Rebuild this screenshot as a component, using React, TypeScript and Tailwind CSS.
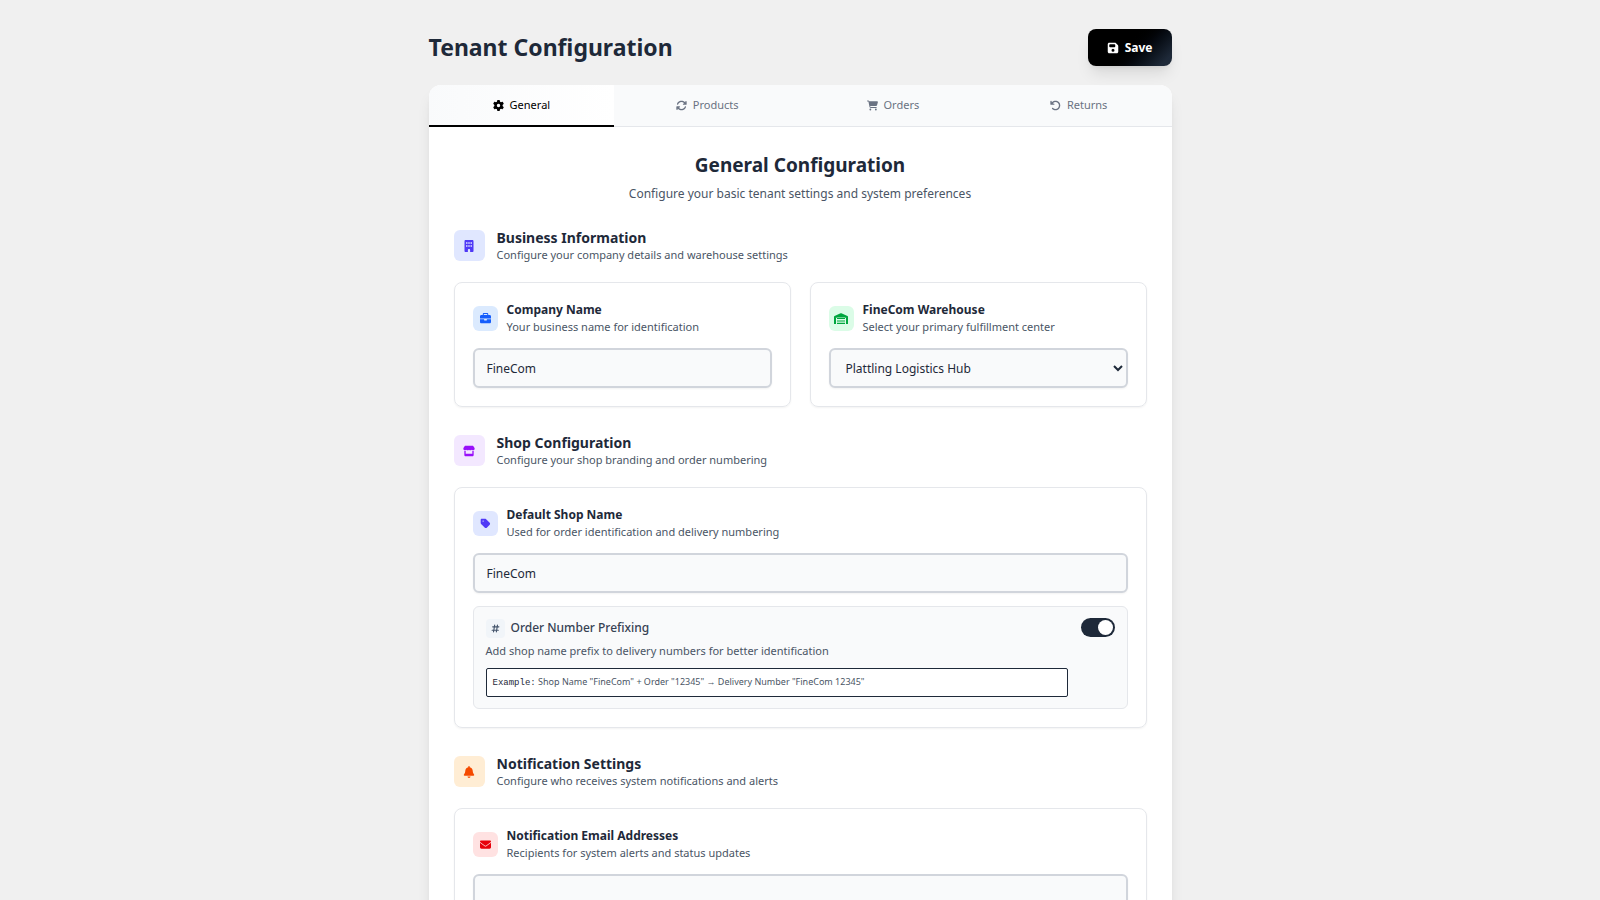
import { useId, type ReactNode } from "react";
import {
  FaArrowRotateLeft,
  FaArrowsRotate,
  FaBell,
  FaBriefcase,
  FaBuilding,
  FaCartShopping,
  FaEnvelope,
  FaFloppyDisk,
  FaGear,
  FaHashtag,
  FaStore,
  FaTag,
} from "react-icons/fa6";

const tabs = [
  { label: "General", icon: FaGear, active: true },
  { label: "Products", icon: FaArrowsRotate, active: false },
  { label: "Orders", icon: FaCartShopping, active: false },
  { label: "Returns", icon: FaArrowRotateLeft, active: false },
];

const fieldClass =
  "h-10 w-full rounded-md border-2 border-gray-300 bg-gray-50 text-xs text-gray-800 shadow-xs outline-none";

function WarehouseIcon() {
  return (
    <svg viewBox="0 0 14 11" className="h-[11px]" fill="none" stroke="currentColor" aria-hidden="true">
      <path d="M1 11V4L7 1.2 13 4v7" strokeWidth="2" strokeLinejoin="round" />
      <path d="M2 3.6 7 1.4l5 2.2v.9H2z" fill="currentColor" stroke="none" />
      <path d="M3 5.5h8M3 8h8M3 10.3h8" strokeWidth="1.2" />
    </svg>
  );
}

function Section({ icon, tone, title, text, children }: {
  icon: ReactNode; tone: string; title: string; text: string; children: ReactNode;
}) {
  return (
    <section className="flex flex-col gap-[19px]">
      <div className="flex items-center gap-3">
        <span className={`flex size-[31px] shrink-0 items-center justify-center rounded-md text-xs [&>svg]:w-auto ${tone}`}>{icon}</span>
        <div>
          <h3 className="text-sm leading-[19px] font-bold text-gray-800">{title}</h3>
          <p className="text-[11px] leading-4 text-gray-600">{text}</p>
        </div>
      </div>
      {children}
    </section>
  );
}

function Card({ icon, tone, title, text, htmlFor, children }: {
  icon: ReactNode; tone: string; title: string; text: string; htmlFor: string; children: ReactNode;
}) {
  return (
    <div className="rounded-lg border border-gray-200 p-[18px] shadow-xs">
      <div className="mb-[13px] flex items-center gap-[9px]">
        <span className={`flex size-[25px] shrink-0 items-center justify-center rounded-md text-[11px] [&>svg]:w-auto ${tone}`}>{icon}</span>
        <div>
          <label htmlFor={htmlFor} className="block text-xs leading-[18px] font-bold text-gray-800">{title}</label>
          <p className="text-[11px] leading-4 text-gray-600">{text}</p>
        </div>
      </div>
      {children}
    </div>
  );
}

export default function App() {
  const id = useId();
  return (
    <div className="h-screen overflow-hidden bg-[#f0f0f0] font-['Noto_Sans',sans-serif]">
      <main className="mx-auto max-w-[743px] pt-[29px]">
        <header className="mb-[19px] flex items-start justify-between">
          <h1 className="text-[23px] leading-9 font-bold text-gray-800">Tenant Configuration</h1>
          <button type="button" className="flex h-[37px] items-center gap-[6px] rounded-lg bg-linear-135 from-black from-40% to-gray-800 to-90% px-[19px] text-xs font-bold text-white shadow-lg">
            <FaFloppyDisk className="size-3" />
            Save
          </button>
        </header>
        <div className="rounded-t-xl bg-white shadow-lg">
          <nav className="grid h-[42px] grid-cols-4 rounded-t-xl border-b border-gray-200 bg-gray-50">
            {tabs.map(({ label, icon: Icon, active }) => (
              <button
                key={label}
                type="button"
                className={
                  active
                    ? "-mb-px flex items-center justify-center gap-[6px] rounded-tl-xl border-b-2 border-black bg-linear-to-r from-gray-50 to-white text-[11px] text-black"
                    : "flex items-center justify-center gap-[6px] text-[11px] text-gray-500"
                }
              >
                <Icon className="h-[11px] w-auto" />
                {label}
              </button>
            ))}
          </nav>
          <div className="flex flex-col gap-[26px] px-[25px] py-6">
            <div className="text-center">
              <h2 className="text-[19px] leading-7 font-bold text-gray-800">General Configuration</h2>
              <p className="mt-[7px] text-xs leading-4 text-gray-600">Configure your basic tenant settings and system preferences</p>
            </div>

            <Section icon={<FaBuilding />} tone="bg-indigo-100 text-indigo-600" title="Business Information" text="Configure your company details and warehouse settings">
              <div className="grid grid-cols-2 gap-[19px]">
                <Card icon={<FaBriefcase />} tone="bg-blue-100 text-blue-600" title="Company Name" text="Your business name for identification" htmlFor={`${id}-company`}>
                  <input id={`${id}-company`} className={`${fieldClass} px-3`} defaultValue="FineCom" />
                </Card>
                <Card icon={<WarehouseIcon />} tone="bg-green-100 text-green-600" title="FineCom Warehouse" text="Select your primary fulfillment center" htmlFor={`${id}-warehouse`}>
                  <select id={`${id}-warehouse`} className={`${fieldClass} pl-[11px]`}>
                    <option>Plattling Logistics Hub</option>
                  </select>
                </Card>
              </div>
            </Section>

            <Section icon={<FaStore />} tone="bg-purple-100 text-purple-600" title="Shop Configuration" text="Configure your shop branding and order numbering">
              <Card icon={<FaTag />} tone="bg-indigo-100 text-indigo-600" title="Default Shop Name" text="Used for order identification and delivery numbering" htmlFor={`${id}-shop`}>
                <input id={`${id}-shop`} className={`${fieldClass} px-3`} defaultValue="FineCom" />
                <div className="mt-[13px] flex items-start gap-[13px] rounded-md border border-gray-200 bg-gray-50 px-3 py-[11px]">
                  <div className="flex-1">
                    <label htmlFor={`${id}-prefix`} className="flex items-center gap-[6px] text-xs leading-5 font-medium text-gray-700">
                      <span className="flex size-[19px] items-center justify-center rounded-sm bg-slate-100 text-[9px] text-slate-600"><FaHashtag /></span>
                      Order Number Prefixing
                    </label>
                    <p className="mt-[5px] text-[11px] leading-4 text-gray-600">Add shop name prefix to delivery numbers for better identification</p>
                    <p className="mt-[9px] rounded-xs border border-gray-800 bg-white px-[6px] py-1 text-[9px] leading-[17px] text-gray-600">
                      <code className="font-['Liberation_Mono',monospace] text-gray-800">Example:</code> Shop Name "FineCom" + Order "12345" → Delivery Number "FineCom 12345"
                    </p>
                  </div>
                  <input id={`${id}-prefix`} type="checkbox" role="switch" defaultChecked className="flex h-[19px] w-[34px] appearance-none items-center rounded-full bg-gray-300 p-[2px] before:size-[15px] before:rounded-full before:bg-white checked:justify-end checked:bg-gray-800" />
                </div>
              </Card>
            </Section>

            <Section icon={<FaBell />} tone="bg-orange-100 text-orange-600" title="Notification Settings" text="Configure who receives system notifications and alerts">
              <Card icon={<FaEnvelope />} tone="bg-red-100 text-red-600" title="Notification Email Addresses" text="Recipients for system alerts and status updates" htmlFor={`${id}-emails`}>
                <textarea id={`${id}-emails`} rows={4} className="block w-full resize-none rounded-md border-2 border-gray-300 bg-gray-50 px-3 py-2 text-xs text-gray-800 shadow-xs outline-none" />
              </Card>
            </Section>
          </div>
        </div>
      </main>
    </div>
  );
}
